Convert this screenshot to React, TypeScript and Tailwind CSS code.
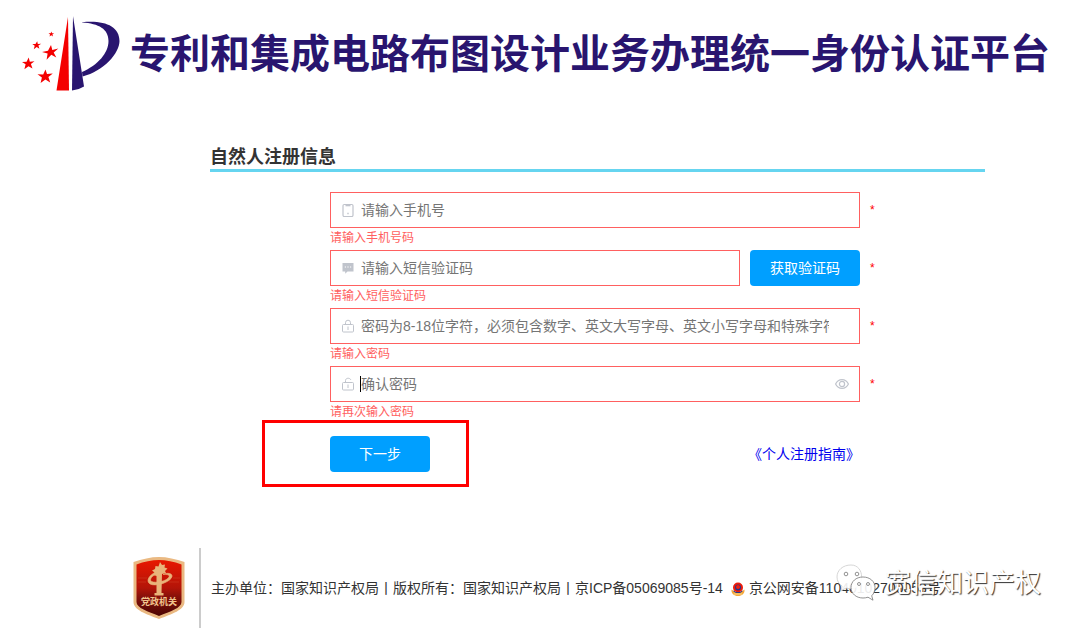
import React, { useState } from "react";

interface FieldProps {
  id: string;
  label: string;
  placeholder: string;
  error: string;
  icon: React.ReactNode;
  type?: string;
  active?: boolean;
  suffix?: React.ReactNode;
  action?: React.ReactNode;
}

const PhoneIcon = () => (
  <svg width="14" height="14" viewBox="0 0 14 14" fill="none" stroke="#c0c4cc" aria-hidden="true">
    <rect x="2" y="1.5" width="10" height="12" rx="1.2" strokeWidth="1.2" />
    <path d="M4.5 2.500h5" strokeWidth="1.6" />
    <path d="M6.300 10.500h1.400" strokeWidth="1.400" />
  </svg>
);

const ChatIcon = () => (
  <svg width="14" height="14" viewBox="0 0 14 14" aria-hidden="true">
    <path d="M1.500 2h11v8.500H6.500L4.200 12.800v-2.300H1.500z" fill="#c0c4cc" />
    <path d="M3.800 6h1.200M6.400 6h1.200M9 6h1.200" stroke="#fff" />
  </svg>
);

const LockIcon = ({ open = false }: { open?: boolean }) => (
  <svg width="14" height="14" viewBox="0 0 14 14" fill="none" stroke="#c0c4cc" aria-hidden="true">
    <rect x="1.5" y="5.5" width="11" height="7.5" rx="1" />
    <path d={open ? "M4.500 5.500V3.500C4.500 0.800 8.800 0.500 9.800 2.800" : "M4.500 5.500V3.700a2.500 2.500 0 0 1 5 0v1.800"} />
    <path d="M7 7.500v3.500" />
  </svg>
);

const EyeIcon = () => (
  <svg width="14" height="14" viewBox="0 0 14 14" fill="none" stroke="#c0c4cc" strokeWidth="1.2" aria-hidden="true">
    <path d="M0.600 7C2 4 4.300 2.600 7 2.600S12 4 13.400 7C12 10 9.700 11.400 7 11.400S2 10 0.600 7z" />
    <circle cx="7" cy="7" r="2.600" />
  </svg>
);

const Logo = () => (
  <svg className="shrink-0" width="100" height="78" viewBox="20 14 100 78" aria-hidden="true">
    <path d="M68 17L56.500 90.500H69z" fill="#f40000" />
    <path d="M73 16L84 86.500Q78.500 90 72 90.500z" fill="#29156f" />
    <path
      d="M82 22.300C104 20 119.500 26 119.500 41C119.500 53 104 71 82.500 76.500L82 72C98 65 108.500 53 108.500 41C108.500 29 99 23.500 82 22.500z"
      fill="#29156f"
    />
    <g fill="#f40000">
      <path d="M51 45l1.300 5 6-1.600-4.600 4.200 2.600 4.800-5-2.600-4.700 5 1-6.200-5.600-1.500 6-1.400z" />
      <path d="M45.500 69.500l1.500 4.600 5.800-.6-4.400 3.400 1.800 5.600-4.800-3-4.800 3.500 1.300-5.600-4.400-3.100 5.700.1z" />
      <path d="M28.700 57.500l1.100 4.200 4.700-.4-3.600 2.700 1.600 4.600-4-2.400-4.100 3 1.200-4.900-3.600-2.400 4.600-.1z" />
      <path d="M37.200 41.300l.6 2.700 3.400-.2-2.800 1.800 1 3.200-2.700-1.800-2.900 2.200.9-3.400-2.400-1.700 3.200-.1z" />
      <path d="M51.400 31.500l.6 1.700 2.100 0-1.700 1.200.6 2-1.700-1.200-1.800 1.300.6-2-1.600-1.200 2.100 0z" />
    </g>
  </svg>
);

const PartyEmblem = () => (
  <svg className="shrink-0" width="52" height="64" viewBox="0 0 52 64" aria-hidden="true">
    <defs>
      <linearGradient id="shield" x1="0" y1="0" x2="0" y2="1">
        <stop offset="0" stopColor="#e81800" />
        <stop offset="0.5" stopColor="#b31408" />
        <stop offset="0.66" stopColor="#85100a" />
        <stop offset="1" stopColor="#4c0503" />
      </linearGradient>
    </defs>
    <path d="M26 1C34 1 43 3 51.500 6V46C51.500 54 39 58 26 63C13 58 0.500 54 0.500 46V6C9 3 18 1 26 1z" fill="#eab982" />
    <path d="M26 4C33 4 41 5.500 48.500 8.500V46C48.500 52 37 55.500 26 60C15 55.500 3.500 52 3.500 46V8.500C11 5.500 19 4 26 4z" fill="url(#shield)" />
    <path d="M5 22h9M5 26h8M40 22h7M36 26h10" stroke="#d2452a" strokeOpacity="0.5" />
    <path
      d="M27 6l2 3 3-.5-.5 3 3 1-2.500 2.500 1 2-4 1-.5 19h2v2.500h-9V37h2V20l-3-1 1-2.500-2.500-2 3-1.500.5-3 3 .5z"
      fill="#e9b47a"
    />
    <path
      d="M23 16C16 19 12.500 25 17 28C23 31 38 26 39 20.500C39.500 17 34 16.500 30 18.500C34 18 37 19 36 21C34 25 23 27.500 18.500 25.500C16 23.500 19 19.500 24 18z"
      fill="#e9b47a"
      stroke="#e9b47a"
      strokeWidth="0.6"
    />
    <text x="26" y="49" textAnchor="middle" fill="#f1c48e" className="text-[9px] font-bold">
      党政机关
    </text>
  </svg>
);

const PoliceBadge = () => (
  <svg className="mx-1 inline-block align-middle" width="14" height="14" viewBox="0 0 14 14" aria-hidden="true">
    <path d="M0.500 7.500C0 11.500 3 14 7 14s7-2.500 6.500-6.500L10 10H4z" fill="#f5a83a" />
    <circle cx="7" cy="5.500" r="5" fill="#ee1c0a" />
    <circle cx="7" cy="5.500" r="3" fill="#26378c" />
    <circle cx="7" cy="5" r="2" fill="#f4200c" />
    <path d="M2.500 9l2.500 1.500h4L11.500 9" fill="none" stroke="#26378c" />
    <path d="M3 12h8" stroke="#fbd680" />
  </svg>
);

const WechatMark = () => (
  <svg width="42" height="38" viewBox="0 0 42 38" aria-hidden="true">
    <g fill="#fff" fillOpacity="0.9" stroke="#777" strokeWidth="0.8">
      <path d="M16 1C8 1 2 6 2 13c0 4 2 7 5 9l-1 5 5-3c2 .6 4 .8 6 .6C30 24 30 1 16 1z" stroke="#ccc" />
      <path d="M28 13c-7 0-12 4.500-12 10.500S21 34 28 34c2 0 3-.2 5-.8l5 3-1.300-4.400C39 29.500 40 27 40 23.500 40 17.500 35 13 28 13z" />
      <circle cx="11" cy="10" r="1.800" />
      <circle cx="22" cy="10" r="1.800" />
      <circle cx="24" cy="20" r="1.500" />
      <circle cx="33" cy="20" r="1.500" />
    </g>
  </svg>
);

const Field = ({ id, label, placeholder, error, icon, type = "text", active, suffix, action }: FieldProps) => {
  const [value, setValue] = useState("");

  return (
    <div>
      <div className="flex items-center gap-[10px]">
        <div className="flex h-9 min-w-0 flex-1 items-center border border-[#ff6060] px-[10px]">
          <label htmlFor={id} aria-label={label} className="mr-[5px] shrink-0">
            {icon}
          </label>
          {/* cursor bar of the active field, only while it is empty */}
          <span className={active && !value ? "h-4 w-px shrink-0 bg-black" : "h-4 w-px shrink-0"} />
          <input
            id={id}
            type={type}
            value={value}
            aria-invalid="true"
            aria-describedby={`${id}-error`}
            placeholder={placeholder}
            onChange={(e) => setValue(e.target.value)}
            className="mr-[6px] h-8 min-w-0 flex-1 bg-transparent text-sm text-[#606266] outline-none placeholder:text-[#757575]"
          />
          <span className="flex w-[14px] shrink-0">{suffix}</span>
        </div>
        {action}
        <span className="w-2 text-xs text-[#ff0000]">*</span>
      </div>
      <p id={`${id}-error`} className="h-[22px] text-xs leading-5 text-[#ff6060]">
        {error}
      </p>
    </div>
  );
};

export default function App() {
  return (
    <div className="bg-white font-['Liberation_Sans','Noto_Sans_CJK_SC',sans-serif] text-sm text-[#333333]">
      <header className="flex items-start gap-[10px] pl-5 pt-[14px]">
        <Logo />
        <h1 className="whitespace-nowrap text-[40px] font-bold leading-[80px] text-[#29156f]">
          专利和集成电路布图设计业务办理统一身份认证平台
        </h1>
      </header>

      <main className="pl-[210px] pr-[90px] pt-[51px]">
        <h2 className="border-b-[3px] border-[#66d5f0] text-lg font-bold leading-6">自然人注册信息</h2>

        <form className="pl-[120px] pr-[107px] pt-5" onSubmit={(e) => e.preventDefault()}>
          <Field id="phone" label="手机号" placeholder="请输入手机号" error="请输入手机号码" icon={<PhoneIcon />} />
          <Field
            id="code"
            label="短信验证码"
            placeholder="请输入短信验证码"
            error="请输入短信验证码"
            icon={<ChatIcon />}
            action={
              <button type="button" className="h-9 w-[110px] shrink-0 rounded bg-[#009fff] text-sm text-white">
                获取验证码
              </button>
            }
          />
          <Field
            id="password"
            type="password"
            label="密码"
            placeholder="密码为8-18位字符，必须包含数字、英文大写字母、英文小写字母和特殊字符"
            error="请输入密码"
            icon={<LockIcon />}
          />
          <Field
            id="confirm"
            type="password"
            label="确认密码"
            placeholder="确认密码"
            error="请再次输入密码"
            icon={<LockIcon open />}
            active
            suffix={
              <button type="button" aria-label="显示密码">
                <EyeIcon />
              </button>
            }
          />

          <div className="flex items-center justify-between pr-[18px] pt-3">
            <div className="relative">
              <button type="submit" className="h-9 w-[100px] rounded bg-[#009fff] text-sm text-white">
                下一步
              </button>
              <div className="pointer-events-none absolute -left-[68px] -top-4 h-[67px] w-[207px] border-[3px] border-[#ff0000]" />
            </div>
            <a href="#guide" className="text-sm text-[#0000ee]">
              《个人注册指南》
            </a>
          </div>
        </form>
      </main>

      <footer className="relative mt-[76px] flex items-center pl-[133px]">
        <PartyEmblem />
        <div className="ml-[14px] flex h-20 items-center whitespace-nowrap border-l-2 border-[#cccccc] pl-[10px]">
          <p>
            主办单位：国家知识产权局丨版权所有：国家知识产权局丨
            <a href="#icp">京ICP备05069085号-14</a>
            <a href="#police" className="ml-1">
              <PoliceBadge />
              京公网安备11040102700053号
            </a>
          </p>
        </div>
        <div className="pointer-events-none absolute right-[34px] top-4 flex items-center gap-2 whitespace-nowrap">
          <WechatMark />
          <span className="text-[26px] leading-9 text-white [text-shadow:1px_1px_1px_#333]">宽信知识产权</span>
        </div>
      </footer>
    </div>
  );
}
